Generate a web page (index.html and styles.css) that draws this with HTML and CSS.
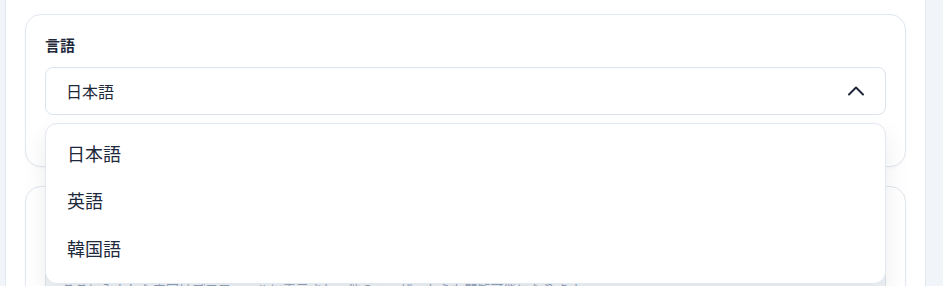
FILE: index.html
```html
<!DOCTYPE html>
<html lang="ja">
<head>
    <meta charset="UTF-8">
    <meta name="viewport" content="width=device-width, initial-scale=1.0">
    <title>設定</title>
    <link rel="stylesheet" href="styles.css">
</head>
<body>
    <div class="rail"></div>

    <main class="main">
        <section class="card card-language">
            <label class="field-label">言語</label>
            <div class="select-wrap">
                <button class="select open">
                    <span>日本語</span>
                    <svg class="chevron" viewBox="0 0 20 20" width="20" height="20">
                        <path d="M3 13.5L10 6.5L17 13.5" fill="none" stroke="currentColor" stroke-width="2" stroke-linecap="round" stroke-linejoin="round"/>
                    </svg>
                </button>
                <ul class="menu">
                    <li class="menu-item">日本語</li>
                    <li class="menu-item">英語</li>
                    <li class="menu-item">韓国語</li>
                </ul>
            </div>
        </section>

        <section class="card card-memo">
            <textarea class="textarea" placeholder="ここに入力した内容はプロフィールに表示され、他のユーザーからも閲覧可能になります"></textarea>
        </section>
    </main>

    <aside class="side"></aside>
</body>
</html>
```

FILE: styles.css
```css
* {
    margin: 0;
    padding: 0;
    box-sizing: border-box;
}

body {
    font-family: "Noto Sans CJK JP", "Noto Sans", sans-serif;
    color: #1e293b;
    display: flex;
    height: 100vh;
    overflow: hidden;
    background: #fff;
}

.rail {
    width: 6px;
    background: #f1f5f9;
    border-right: 1px solid #e2e8f0;
}

.side {
    width: 18px;
    background: #f1f5f9;
    border-left: 1px solid #e2e8f0;
}

.main {
    flex: 1;
    padding: 14px 19px;
    display: flex;
    flex-direction: column;
    gap: 19px;
}

.card {
    background: #fff;
    border: 1px solid #e2e8f0;
    border-radius: 16px;
    padding: 19px;
    box-shadow: 0 1px 3px rgba(15, 23, 42, 0.04);
}

.card-language {
    padding-bottom: 51px;
}

.card-memo {
    padding-top: 81px;
}

.field-label {
    display: block;
    font-size: 15px;
    font-weight: 700;
    line-height: 22px;
    margin-bottom: 11px;
}

.select-wrap {
    position: relative;
}

.select {
    width: 100%;
    height: 48px;
    display: flex;
    align-items: center;
    justify-content: space-between;
    padding: 0 19px 0 20px;
    background: #fff;
    border: 1px solid #dbe3ec;
    border-radius: 8px;
    font-family: inherit;
    font-size: 16px;
    color: #1e293b;
    text-align: left;
}

.chevron {
    color: #1e293b;
}

.menu {
    position: absolute;
    top: calc(100% + 8px);
    left: 0;
    right: 0;
    z-index: 10;
    list-style: none;
    padding: 5px 0 11px;
    background: #fff;
    border: 1px solid #e2e8f0;
    border-radius: 12px;
    box-shadow: 0 10px 25px rgba(15, 23, 42, 0.08);
}

.menu-item {
    height: 47.5px;
    display: flex;
    align-items: center;
    padding: 0 21px;
    font-size: 18px;
    color: #1e293b;
}

.textarea {
    display: block;
    width: 100%;
    height: 96px;
    padding: 10px 16px;
    background: #f1f5f9;
    border: 1px solid #dbe3ec;
    border-radius: 8px;
    font-family: inherit;
    font-size: 13px;
    line-height: 20px;
    resize: none;
}

.textarea::placeholder {
    color: #94a3b8;
}
```
